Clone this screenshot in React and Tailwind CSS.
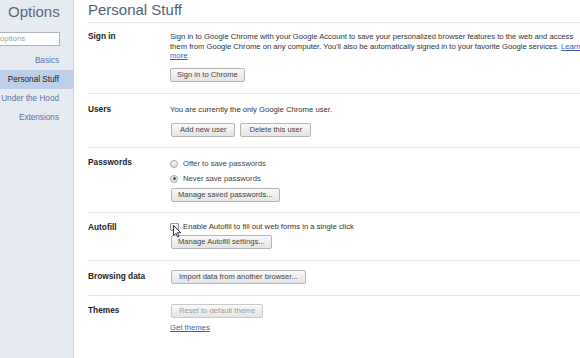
import React from "react";

const Button = ({ children, disabled, className = "" }) => (
  <button
    disabled={disabled}
    className={`h-[14px] px-[6px] border border-[#b5b5b5] rounded-[2px] bg-gradient-to-b from-[#fafafa] to-[#e4e4e4] text-[7.6px] leading-[12px] whitespace-nowrap ${
      disabled ? "text-[#9a9a9a] border-[#c8c8c8]" : "text-[#444]"
    } ${className}`}
  >
    {children}
  </button>
);

const Radio = ({ checked }) => (
  <span className="w-[8px] h-[8px] rounded-full border border-[#a8a8a8] bg-gradient-to-b from-[#f4f4f4] to-[#dedede] flex items-center justify-center">
    {checked && <span className="w-[3px] h-[3px] rounded-full bg-[#555]" />}
  </span>
);

const Section = ({ label, pt, pb, children, last }) => (
  <div
    className={`flex ${last ? "" : "border-b border-[#e6e6e6]"}`}
    style={{ paddingTop: pt, paddingBottom: pb }}
  >
    <div className="w-[82px] shrink-0 text-[8.3px] leading-[9.5px] font-bold text-[#222]">
      {label}
    </div>
    <div className="flex-1 min-w-0 text-[7.7px] leading-[9.5px] text-[#333]">
      {children}
    </div>
  </div>
);

const App = () => {
  return (
    <div
      className="w-[580px] h-[358px] flex overflow-hidden bg-white"
      style={{ fontFamily: '"Liberation Sans", Arial, sans-serif' }}
    >
      {/* Sidebar */}
      <div className="w-[74px] shrink-0 bg-[#e6ebf2] border-r border-[#cdd4de] flex flex-col">
        <div className="h-[24px] pl-[8px] pt-[1px] text-[15px] leading-[22px] text-[#59667a] whitespace-nowrap">
          Options
        </div>

        <div className="mt-[8px] w-[60px] h-[14px] bg-white border-y border-r border-[#a9b2be] text-[7.8px] leading-[12px] text-[#a0a0a0] overflow-hidden whitespace-nowrap">
          options
        </div>

        <div className="mt-[5px] flex flex-col text-[8.2px] text-right">
          <div className="h-[19px] leading-[19px] pr-[14px] text-[#5e71a5]">Basics</div>
          <div className="h-[19px] leading-[19px] pr-[14px] bg-[#bccee9] text-[#222]">
            Personal Stuff
          </div>
          <div className="h-[19px] leading-[19px] pr-[14px] text-[#5e71a5] whitespace-nowrap">
            Under the Hood
          </div>
          <div className="h-[19px] leading-[19px] pr-[14px] text-[#5e71a5]">Extensions</div>
        </div>
      </div>

      {/* Main */}
      <div className="flex-1 min-w-0 pl-[14px] relative overflow-hidden">
        <div className="h-[23px] border-b border-[#e6e6e6] text-[15px] leading-[20px] text-[#53627a] whitespace-nowrap">
          Personal Stuff
        </div>

        <Section label="Sign in" pt="9px" pb="11px">
          <div className="tracking-[-0.02px]">
            <div className="whitespace-nowrap">
              Sign in to Google Chrome with your Google Account to save your personalized browser features to the web and access
            </div>
            <div className="whitespace-nowrap">
              them from Google Chrome on any computer. You'll also be automatically signed in to your favorite Google services.{" "}
              <a href="#" className="text-[#3a5db0] underline">Learn</a>
            </div>
            <div>
              <a href="#" className="text-[#3a5db0] underline">more</a>
            </div>
          </div>
          <div className="mt-[7px]">
            <Button>Sign in to Chrome</Button>
          </div>
        </Section>

        <Section label="Users" pt="11px" pb="10px">
          <div className="whitespace-nowrap">You are currently the only Google Chrome user.</div>
          <div className="mt-[9px] flex gap-[5px] pl-[1px]">
            <Button className="px-[8px]">Add new user</Button>
            <Button className="px-[8px]">Delete this user</Button>
          </div>
        </Section>

        <Section label="Passwords" pt="10px" pb="10px">
          <div className="h-[14px] flex items-center gap-[5px] -mt-[1px] whitespace-nowrap">
            <Radio />
            <span className="text-[#444]">Offer to save passwords</span>
          </div>
          <div className="h-[15px] flex items-center gap-[5px] whitespace-nowrap">
            <Radio checked />
            <span className="text-[#444]">Never save passwords</span>
          </div>
          <div className="mt-[2px] pl-[1px]">
            <Button>Manage saved passwords...</Button>
          </div>
        </Section>

        <Section label="Autofill" pt="10px" pb="11px">
          <div className="h-[10px] flex items-center gap-[4px] -mt-[1px] whitespace-nowrap relative">
            <span className="w-[9px] h-[8px] rounded-[1px] border border-[#9a9a9a] bg-gradient-to-b from-[#f6f6f6] to-[#dcdcdc]" />
            <span className="text-[#333]">Enable Autofill to fill out web forms in a single click</span>
            <svg
              className="absolute left-[3px] top-[3px]"
              width="9"
              height="13"
              viewBox="0 0 9 13"
            >
              <path
                d="M0.5 0.5 L0.5 10.5 L3 8.2 L4.6 11.8 L6 11.2 L4.5 7.7 L7.8 7.7 Z"
                fill="white"
                stroke="#222"
                strokeWidth="0.9"
                strokeLinejoin="round"
              />
            </svg>
          </div>
          <div className="mt-[3px] pl-[1px]">
            <Button>Manage Autofill settings...</Button>
          </div>
        </Section>

        <Section label="Browsing data" pt="11px" pb="11px">
          <div className="-mt-[2px] pl-[1px]">
            <Button className="px-[7px]">Import data from another browser...</Button>
          </div>
        </Section>

        <Section label="Themes" pt="10px" pb="10px" last>
          <div className="-mt-[2px] pl-[1px]">
            <Button disabled className="px-[7px]">Reset to default theme</Button>
          </div>
          <div className="mt-[5px]">
            <a href="#" className="text-[#3a5db0] underline">Get themes</a>
          </div>
        </Section>
      </div>
    </div>
  );
};

export default App;
